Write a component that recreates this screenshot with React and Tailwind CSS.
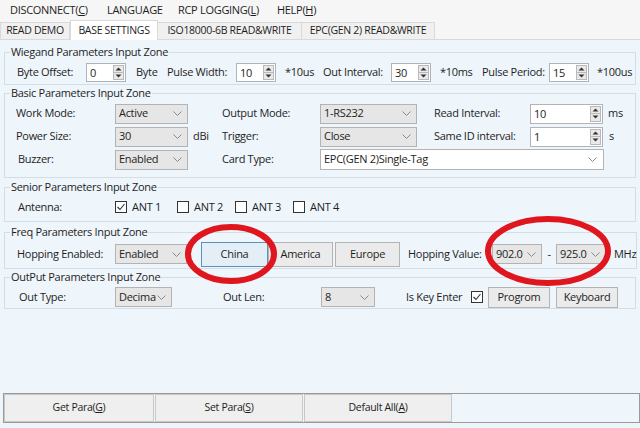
import React from "react";

function Arrow({ up }) {
  return (
    <svg width="7" height="4" viewBox="0 0 7 4">
      {up ? <polygon points="0.5,3.5 3.5,0.5 6.5,3.5" fill="#333" /> : <polygon points="0.5,0.5 3.5,3.5 6.5,0.5" fill="#333" />}
    </svg>
  );
}

function Spinner({ className, value }) {
  return (
    <div className={`flex h-[19px] shrink-0 items-stretch border border-[#aeb4ba] bg-white ${className}`}>
      <div className="flex-1 pl-[3px] leading-[17px]">{value}</div>
      <div className="my-[1px] mr-[1px] flex w-[11px] flex-col border border-[#b9b9b9] bg-[#e9e9e9]">
        <div className="flex flex-1 items-center justify-center border-b border-[#b9b9b9]"><Arrow up /></div>
        <div className="flex flex-1 items-center justify-center"><Arrow /></div>
      </div>
    </div>
  );
}

function Chevron() {
  return (
    <svg width="9" height="5" viewBox="0 0 9 5">
      <path d="M0.5 0.5 L4.5 4.5 L8.5 0.5" stroke="#8a8a8a" strokeWidth="1" fill="none" />
    </svg>
  );
}

function Select({ className, value }) {
  return (
    <div className={`flex h-[20px] shrink-0 items-center justify-between border border-[#b3b3b3] bg-[#e6e6e6] pl-[3px] pr-[5px] ${className}`}>
      <span>{value}</span>
      <Chevron />
    </div>
  );
}

function Check({ checked }) {
  return (
    <div className="flex h-[12px] w-[12px] shrink-0 items-center justify-center border border-[#333] bg-white">
      {checked && (
        <svg width="10" height="10" viewBox="0 0 10 10">
          <path d="M1.5 5 L4 7.5 L8.5 2" stroke="#333" strokeWidth="1.1" fill="none" />
        </svg>
      )}
    </div>
  );
}

function Btn({ className, children }) {
  return (
    <div className={`flex shrink-0 items-center justify-center border border-[#b4b4b4] bg-[#ebebeb] ${className}`}>{children}</div>
  );
}

function Group({ title, className, children }) {
  return (
    <fieldset className={`mx-[4px] border border-[#d3dde6] ${className}`}>
      <legend className="ml-[5px] px-[1px] leading-[14px]">{title}</legend>
      {children}
    </fieldset>
  );
}

export default function App() {
  return (
    <div className="relative h-[428px] w-[640px] overflow-hidden whitespace-nowrap bg-[#f3f3f3] font-['Open_Sans',sans-serif] text-[11px] tracking-[-0.3px] text-[#1e1e1e]">
      {/* menu */}
      <div className="flex h-[20px] items-center bg-[#f6f6f6] pl-[10px]">
        <span className="w-[97px] shrink-0">DISCONNECT(<u>C</u>)</span>
        <span className="w-[71px] shrink-0">LANGUAGE</span>
        <span className="w-[99px] shrink-0">RCP LOGGING(<u>L</u>)</span>
        <span className="shrink-0">HELP(<u>H</u>)</span>
      </div>
      {/* tabs */}
      <div className="flex h-[20px] items-end border-b border-[#d9d9d9] bg-[#f6f6f6] text-[10.5px]">
        <div className="flex h-[17px] w-[70px] shrink-0 items-center justify-center border border-b-0 border-[#d9d9d9] bg-[#f0f0f0]">READ DEMO</div>
        <div className="relative -mb-[1px] flex h-[20px] w-[88px] shrink-0 items-center justify-center border border-b-0 border-[#d9d9d9] bg-white">BASE SETTINGS</div>
        <div className="flex h-[17px] w-[144px] shrink-0 items-center justify-center border border-b-0 border-l-0 border-[#d9d9d9] bg-[#f0f0f0]">ISO18000-6B READ&amp;WRITE</div>
        <div className="flex h-[17px] w-[133px] shrink-0 items-center justify-center border border-b-0 border-l-0 border-[#d9d9d9] bg-[#f0f0f0]">EPC(GEN 2) READ&amp;WRITE</div>
      </div>
      {/* panel */}
      <div className="flex h-[388px] flex-col bg-[#eef5fb] pt-[5px]">
        <Group title="Wiegand Parameters Input Zone" className="pb-[1px]">
          <div className="mt-[2px] flex h-[22px] items-center pl-[12px]">
            <span className="w-[69px] shrink-0">Byte Offset:</span>
            <Spinner className="w-[40px]" value="0" />
            <span className="ml-[10px] w-[31px] shrink-0">Byte</span>
            <span className="w-[69px] shrink-0">Pulse Width:</span>
            <Spinner className="w-[40px]" value="10" />
            <span className="ml-[9px] w-[38px] shrink-0">*10us</span>
            <span className="w-[68px] shrink-0">Out Interval:</span>
            <Spinner className="w-[40px]" value="30" />
            <span className="ml-[9px] w-[42px] shrink-0">*10ms</span>
            <span className="w-[67px] shrink-0">Pulse Period:</span>
            <Spinner className="w-[40px]" value="15" />
            <span className="ml-[8px]">*100us</span>
          </div>
        </Group>
        <Group title="Basic Parameters Input Zone" className="mt-[1px] pb-[6px]">
          <div className="mt-[2px] flex h-[23px] items-center pl-[11px]">
            <span className="w-[99px] shrink-0">Work Mode:</span>
            <Select className="w-[73px]" value="Active" />
            <span className="w-[34px] shrink-0"></span>
            <span className="w-[98px] shrink-0">Output Mode:</span>
            <Select className="w-[97px]" value="1-RS232" />
            <span className="w-[17px] shrink-0"></span>
            <span className="w-[96px] shrink-0">Read Interval:</span>
            <Spinner className="h-[20px] w-[73px]" value="10" />
            <span className="ml-[5px]">ms</span>
          </div>
          <div className="flex h-[23px] items-center pl-[11px]">
            <span className="w-[99px] shrink-0">Power Size:</span>
            <Select className="w-[73px]" value="30" />
            <span className="w-[34px] shrink-0 pl-[5px]">dBi</span>
            <span className="w-[98px] shrink-0">Trigger:</span>
            <Select className="w-[97px]" value="Close" />
            <span className="w-[17px] shrink-0"></span>
            <span className="w-[96px] shrink-0">Same ID interval:</span>
            <Spinner className="h-[20px] w-[73px]" value="1" />
            <span className="ml-[6px]">s</span>
          </div>
          <div className="flex h-[23px] items-center pl-[13px]">
            <span className="w-[97px] shrink-0">Buzzer:</span>
            <Select className="w-[73px]" value="Enabled" />
            <span className="w-[34px] shrink-0"></span>
            <span className="w-[98px] shrink-0">Card Type:</span>
            <div className="flex h-[21px] w-[284px] shrink-0 items-center justify-between border border-[#b3b3b3] bg-white pl-[3px] pr-[6px]">
              <span>EPC(GEN 2)Single-Tag</span>
              <Chevron />
            </div>
          </div>
        </Group>
        <Group title="Senior Parameters Input Zone" className="mt-[2px] pb-[3px]">
          <div className="mt-[2px] flex h-[22px] items-center pl-[13px]">
            <span className="w-[97px] shrink-0">Antenna:</span>
            <div className="flex w-[62px] shrink-0 items-center gap-[5px]"><Check checked /><span>ANT 1</span></div>
            <div className="flex w-[58px] shrink-0 items-center gap-[5px]"><Check /><span>ANT 2</span></div>
            <div className="flex w-[58px] shrink-0 items-center gap-[5px]"><Check /><span>ANT 3</span></div>
            <div className="flex items-center gap-[5px]"><Check /><span>ANT 4</span></div>
          </div>
        </Group>
        <Group title="Freq Parameters Input Zone" className="mt-[3px] pb-[1px]">
          <div className="mt-[2px] flex h-[26px] items-center pl-[12px]">
            <span className="w-[98px] shrink-0">Hopping Enabled:</span>
            <Select className="w-[72px]" value="Enabled" />
            <span className="w-[14px] shrink-0"></span>
            <div className="flex h-[25px] w-[67px] shrink-0 items-center justify-center border border-[#5d90be] bg-[#e3eef7]">China</div>
            <Btn className="h-[25px] w-[65px]">America</Btn>
            <Btn className="ml-[2px] h-[25px] w-[65px]">Europe</Btn>
            <span className="ml-[8px] w-[84px] shrink-0">Hopping Value:</span>
            <Select className="w-[50px]" value="902.0" />
            <span className="w-[14px] shrink-0 text-center">-</span>
            <Select className="w-[50px]" value="925.0" />
            <span className="ml-[8px] shrink-0">MHz</span>
          </div>
        </Group>
        <Group title="OutPut Parameters Input Zone" className="mt-[1px]">
          <div className="mt-[2px] flex h-[22px] items-center pl-[14px]">
            <span className="w-[96px] shrink-0">Out Type:</span>
            <Select className="w-[57px]" value="Decima" />
            <span className="w-[51px] shrink-0"></span>
            <span className="w-[98px] shrink-0">Out Len:</span>
            <Select className="w-[54px]" value="8" />
            <span className="ml-[31px] w-[65px] shrink-0">Is Key Enter</span>
            <Check checked />
            <Btn className="ml-[5px] h-[21px] w-[62px]">Progrom</Btn>
            <Btn className="ml-[6px] h-[21px] w-[62px]">Keyboard</Btn>
          </div>
        </Group>
        <div className="flex-1" />
        <div className="mb-[5px] ml-[3px] flex h-[30px] border border-[#9a9a9a] bg-[#eef5fb]">
          <Btn className="w-[150px] border-[#c8c8c8] bg-[#efefef] text-[10.5px]">Get Para(<u>G</u>)</Btn>
          <Btn className="ml-[1px] w-[148px] border-[#c8c8c8] bg-[#efefef] text-[10.5px]">Set Para(<u>S</u>)</Btn>
          <Btn className="ml-[1px] w-[148px] border-[#c8c8c8] bg-[#efefef] text-[10.5px]">Default All(<u>A</u>)</Btn>
        </div>
      </div>
      {/* red annotations */}
      <svg className="pointer-events-none absolute left-0 top-0" width="640" height="428" viewBox="0 0 640 428">
        <ellipse cx="231" cy="254" rx="43" ry="27" fill="none" stroke="#e0161f" strokeWidth="6" />
        <ellipse cx="548" cy="251" rx="60" ry="32" fill="none" stroke="#e0161f" strokeWidth="6" />
      </svg>
    </div>
  );
}
